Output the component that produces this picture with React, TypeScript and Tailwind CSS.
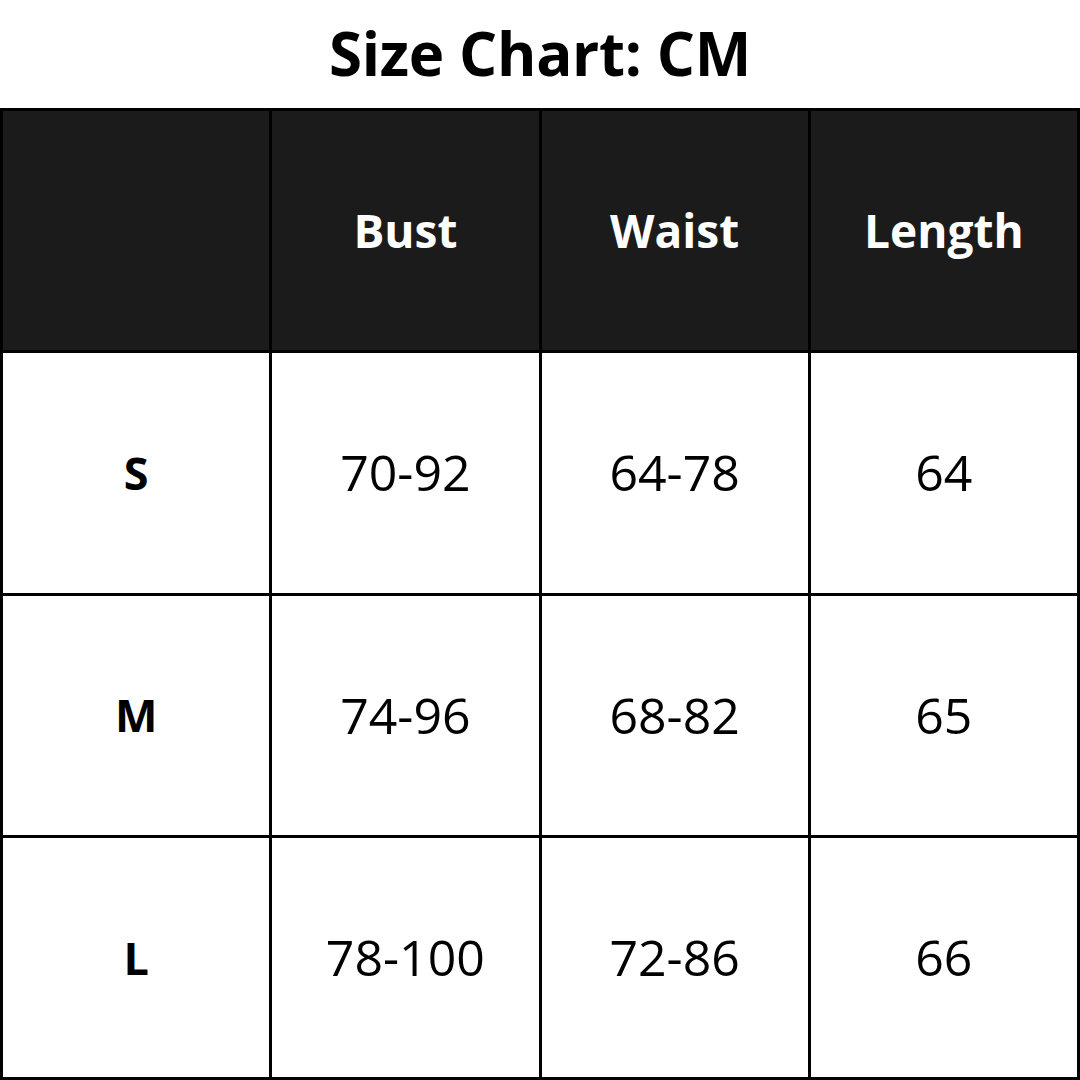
const rows = [
  { size: "S", bust: "70-92", waist: "64-78", length: "64" },
  { size: "M", bust: "74-96", waist: "68-82", length: "65" },
  { size: "L", bust: "78-100", waist: "72-86", length: "66" },
];

const font = { fontFamily: '"Open Sans", "Liberation Sans", sans-serif' };

export default function App() {
  return (
    <div className="w-[1080px] h-[1080px] bg-white flex flex-col" style={font}>
      <div className="h-[108px] flex items-center justify-center pb-[2px]">
        <h1 className="text-[60px] font-bold text-black leading-none tracking-[-0.3px]">
          Size Chart: CM
        </h1>
      </div>

      <div className="flex-1 grid grid-cols-4 grid-rows-4 gap-[3px] p-[3px] bg-black">
        <div className="bg-[#1b1b1b]" />
        {["Bust", "Waist", "Length"].map((h) => (
          <div
            key={h}
            className="bg-[#1b1b1b] flex items-center justify-center text-white text-[46px] font-bold"
          >
            {h}
          </div>
        ))}

        {rows.map((r) => (
          <>
            <div
              key={r.size}
              className="bg-white flex items-center justify-center text-black text-[45px] font-bold"
            >
              {r.size}
            </div>
            <div className="bg-white flex items-center justify-center text-black text-[50px]">
              {r.bust}
            </div>
            <div className="bg-white flex items-center justify-center text-black text-[50px]">
              {r.waist}
            </div>
            <div className="bg-white flex items-center justify-center text-black text-[50px]">
              {r.length}
            </div>
          </>
        ))}
      </div>
    </div>
  );
}
